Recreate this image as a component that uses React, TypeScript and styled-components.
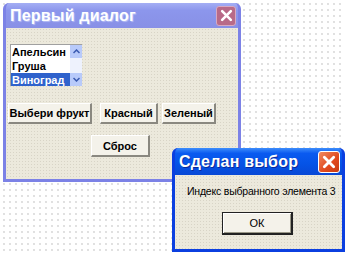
import React, { FC } from "react";
import styled, { createGlobalStyle, css } from "styled-components";

const GlobalStyle = createGlobalStyle`
  html, body {
    margin: 0;
    padding: 0;
    background: #ffffff;
  }
  body {
    font-family: "Liberation Sans", Arial, sans-serif;
  }
`;

const Desktop = styled.div`
  position: relative;
  width: 342px;
  height: 253px;
  background-color: #ffffff;
  background-image: radial-gradient(#d6d6d6 0.6px, transparent 1px);
  background-size: 6px 6px;
  background-position: 1px 1px;
`;

const Window = styled.div<{ $active?: boolean }>`
  position: absolute;
  display: flex;
  flex-direction: column;
  box-sizing: border-box;
  border-radius: 6px 6px 0 0;
  overflow: hidden;
  ${(p) =>
    p.$active
      ? css`
          border: 3px solid #0b3fe0;
          border-top: none;
          background: #0b3fe0;
        `
      : css`
          border: 3px solid #7c82e6;
          border-top: none;
          background: #7c82e6;
        `}
`;

const TitleBar = styled.div<{ $active?: boolean }>`
  display: flex;
  align-items: center;
  justify-content: space-between;
  padding: 0 2px 0 4px;
  flex-shrink: 0;
  ${(p) =>
    p.$active
      ? css`
          height: 27px;
          background: linear-gradient(
            #3d8dfb 0%,
            #0a5af0 20%,
            #0553e6 60%,
            #0848d6 100%
          );
        `
      : css`
          height: 25px;
          background: linear-gradient(#a4aef4 0%, #8c96ec 30%, #8890e6 100%);
        `}
`;

const Title = styled.span<{ $active?: boolean }>`
  color: #ffffff;
  font-weight: bold;
  font-size: 16px;
  letter-spacing: 0.2px;
  text-shadow: ${(p) =>
    p.$active ? "1px 1px 0 #0a2a9c" : "1px 1px 1px #b8c0f4"};
`;

const CloseButton = styled.div<{ $active?: boolean }>`
  width: 20px;
  height: 20px;
  border-radius: 3px;
  display: flex;
  align-items: center;
  justify-content: center;
  box-sizing: border-box;
  ${(p) =>
    p.$active
      ? css`
          background: linear-gradient(135deg, #f08a60, #e0481c 60%, #c83a10);
          border: 1px solid #ffffff;
        `
      : css`
          background: #b86a88;
          border: 1px solid #d8a8c0;
        `}
`;

const Body = styled.div`
  flex: 1;
  background-color: #ece9dc;
  background-image: radial-gradient(#d8d4c6 0.6px, transparent 1px);
  background-size: 3px 3px;
`;

const FirstBody = styled(Body)`
  display: flex;
  flex-direction: column;
  padding: 16px 0 0 2px;
`;

const ListBox = styled.div`
  display: flex;
  width: 72px;
  height: 42px;
  margin-left: 2px;
  background: #ffffff;
  border-top: 1px solid #a0a0a0;
  border-left: 1px solid #a0a0a0;
  box-sizing: border-box;
`;

const Items = styled.div`
  flex: 1;
  display: flex;
  flex-direction: column;
  overflow: hidden;
`;

const Item = styled.div<{ $selected?: boolean }>`
  height: 14px;
  line-height: 14px;
  font-size: 11px;
  font-weight: bold;
  padding-left: 1px;
  white-space: nowrap;
  color: ${(p) => (p.$selected ? "#ffffff" : "#000000")};
  background: ${(p) => (p.$selected ? "#2f62cc" : "transparent")};
`;

const ScrollBar = styled.div`
  width: 12px;
  flex-shrink: 0;
  display: flex;
  flex-direction: column;
  background: #e4ecfc;
`;

const ScrollButton = styled.div`
  height: 13px;
  background: #b8cafa;
  display: flex;
  align-items: center;
  justify-content: center;
`;

const ScrollTrack = styled.div`
  flex: 1;
  background: #eef2fd;
`;

const ButtonRow = styled.div`
  display: flex;
  margin-top: 17px;
`;

const PushButton = styled.div<{ $w: number; $ml?: number }>`
  width: ${(p) => p.$w}px;
  height: 21px;
  margin-left: ${(p) => p.$ml ?? 0}px;
  box-sizing: border-box;
  display: flex;
  align-items: center;
  justify-content: center;
  font-size: 11px;
  font-weight: bold;
  color: #000000;
  background: #f4f2ea;
  border-top: 1px solid #ffffff;
  border-left: 1px solid #ffffff;
  border-right: 2px solid #8a8880;
  border-bottom: 2px solid #8a8880;
  white-space: nowrap;
`;

const ResetRow = styled.div`
  display: flex;
  margin-top: 11px;
  padding-left: 83px;
`;

const SecondBody = styled(Body)`
  display: flex;
  flex-direction: column;
`;

const Message = styled.div`
  font-size: 10.5px;
  letter-spacing: -0.2px;
  color: #000000;
  margin-top: 10px;
  padding-left: 12px;
  white-space: nowrap;
`;

const OkButton = styled.div`
  width: 71px;
  height: 23px;
  margin-top: 15px;
  margin-left: 47px;
  box-sizing: border-box;
  display: flex;
  align-items: center;
  justify-content: center;
  font-size: 11px;
  color: #000000;
  background: #f4f2ea;
  border: 1px solid #222222;
  border-right: 2px solid #222222;
  border-bottom: 2px solid #222222;
  box-shadow: inset 1px 1px 0 #ffffff, inset -1px -1px 0 #9a9888;
`;

const Cross: FC<{ size: number }> = ({ size }) => (
  <svg width={size} height={size} viewBox="0 0 12 12">
    <path
      d="M2 2 L10 10 M10 2 L2 10"
      stroke="#ffffff"
      strokeWidth={2.4}
      strokeLinecap="round"
    />
  </svg>
);

const Arrow: FC<{ down?: boolean }> = ({ down }) => (
  <svg width="7" height="5" viewBox="0 0 7 5">
    <path
      d={down ? "M0.5 1 L3.5 4 L6.5 1" : "M0.5 4 L3.5 1 L6.5 4"}
      fill="none"
      stroke="#3a5ab0"
      strokeWidth={1.5}
    />
  </svg>
);

const fruits = ["Апельсин", "Груша", "Виноград"];

const App: FC = () => {
  return (
    <>
      <GlobalStyle />
      <Desktop>
        <Window style={{ left: 3, top: 3, width: 238, height: 179 }}>
          <TitleBar>
            <Title>Первый диалог</Title>
            <CloseButton>
              <Cross size={13} />
            </CloseButton>
          </TitleBar>
          <FirstBody>
            <ListBox>
              <Items>
                {fruits.map((f, i) => (
                  <Item key={f} $selected={i === 2}>
                    {f}
                  </Item>
                ))}
              </Items>
              <ScrollBar>
                <ScrollButton>
                  <Arrow />
                </ScrollButton>
                <ScrollTrack />
                <ScrollButton>
                  <Arrow down />
                </ScrollButton>
              </ScrollBar>
            </ListBox>
            <ButtonRow>
              <PushButton $w={84}>Выбери фрукт</PushButton>
              <PushButton $w={58} $ml={8}>
                Красный
              </PushButton>
              <PushButton $w={54} $ml={4}>
                Зеленый
              </PushButton>
            </ButtonRow>
            <ResetRow>
              <PushButton $w={59} style={{ height: 22 }}>
                Сброс
              </PushButton>
            </ResetRow>
          </FirstBody>
        </Window>
        <Window $active style={{ left: 172, top: 148, width: 173, height: 104 }}>
          <TitleBar $active>
            <Title $active>Сделан выбор</Title>
            <CloseButton $active style={{ width: 22, height: 22 }}>
              <Cross size={14} />
            </CloseButton>
          </TitleBar>
          <SecondBody>
            <Message>Индекс выбранного элемента 3</Message>
            <OkButton>ОК</OkButton>
          </SecondBody>
        </Window>
      </Desktop>
    </>
  );
};

export default App;
